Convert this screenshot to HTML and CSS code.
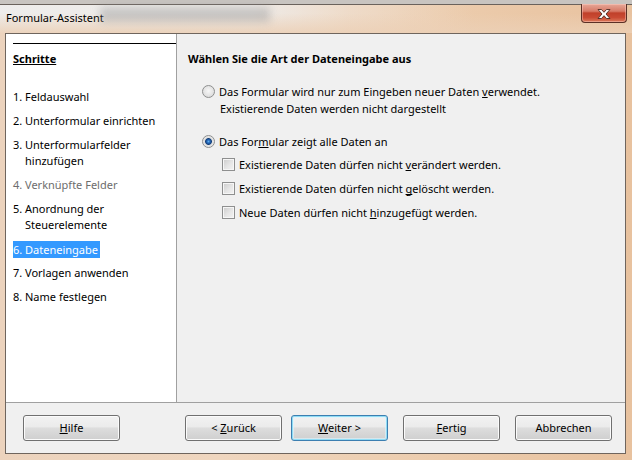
FILE: index.html
```html
<!DOCTYPE html>
<html lang="de">
<head>
<meta charset="utf-8">
<title>Formular-Assistent</title>
<link rel="stylesheet" href="styles.css">
</head>
<body>
<div class="frame">
  <div class="glass"></div>
  <div class="titlebar">
    <span class="title">Formular-Assistent</span>
  </div>
  <div class="close">
    <svg width="14" height="12" viewBox="0 0 14 12">
      <path d="M1 1.5 L4.5 1.5 L7 4.3 L9.5 1.5 L13 1.5 L9 6 L13 10.5 L9.5 10.5 L7 7.7 L4.5 10.5 L1 10.5 L5 6 Z" fill="#fff" stroke="#4d2a22" stroke-width="0.9" stroke-linejoin="round"/>
    </svg>
  </div>
  <div class="client">
    <div class="main">
      <div class="steps">
        <div class="steps-line"></div>
        <div class="steps-head">Schritte</div>
        <ol class="step-list">
          <li class="step"><span class="num">1.</span><span class="txt">Feldauswahl</span></li>
          <li class="step"><span class="num">2.</span><span class="txt">Unterformular einrichten</span></li>
          <li class="step"><span class="num">3.</span><span class="txt">Unterformularfelder hinzufügen</span></li>
          <li class="step disabled"><span class="num">4.</span><span class="txt">Verknüpfte Felder</span></li>
          <li class="step"><span class="num">5.</span><span class="txt">Anordnung der Steuerelemente</span></li>
          <li class="step"><span class="hl"><span class="num">6.</span><span class="txt">Dateneingabe</span></span></li>
          <li class="step"><span class="num">7.</span><span class="txt">Vorlagen anwenden</span></li>
          <li class="step"><span class="num">8.</span><span class="txt">Name festlegen</span></li>
        </ol>
      </div>
      <div class="content">
        <h1 class="heading">Wählen Sie die Art der Dateneingabe aus</h1>
        <div class="opt radio-opt first">
          <span class="radio"></span>
          <span class="label">Das Formular wird nur zum Eingeben neuer Daten <u>v</u>erwendet.<br><span class="l2">Existierende Daten werden nicht dargestellt</span></span>
        </div>
        <div class="opt radio-opt second">
          <span class="radio checked"></span>
          <span class="label">Das For<u>m</u>ular zeigt alle Daten an</span>
        </div>
        <div class="opt check-opt">
          <span class="check"></span>
          <span class="label">Existierende Daten dürfen nicht <u>v</u>erändert werden.</span>
        </div>
        <div class="opt check-opt">
          <span class="check"></span>
          <span class="label">Existierende Daten dürfen nicht <u>g</u>elöscht werden.</span>
        </div>
        <div class="opt check-opt">
          <span class="check"></span>
          <span class="label">Neue Daten dürfen nicht <u>h</u>inzugefügt werden.</span>
        </div>
      </div>
    </div>
    <div class="footer">
      <div class="btn"><span><u>H</u>ilfe</span></div>
      <div class="btn back"><span>&lt; <u>Z</u>urück</span></div>
      <div class="btn next focus"><span><u>W</u>eiter &gt;</span></div>
      <div class="btn finish"><span><u>F</u>ertig</span></div>
      <div class="btn cancel"><span>Abbrechen</span></div>
    </div>
  </div>
</div>
</body>
</html>
```

FILE: styles.css
```css
* { box-sizing: border-box; }

html, body {
  margin: 0;
  padding: 0;
}

body {
  width: 632px;
  height: 460px;
  overflow: hidden;
  font-family: "Noto Sans", "Open Sans", sans-serif;
  font-size: 11px;
  color: #000;
}

u {
  text-decoration-skip-ink: none;
}

.frame {
  position: relative;
  width: 632px;
  height: 460px;
  background: linear-gradient(90deg, #ecd3bd 0%, #efd6bf 35%, #ecccad 70%, #e8c29f 100%);
}

.glass {
  position: absolute;
  left: 100px;
  top: 7px;
  width: 170px;
  height: 15px;
  background: rgba(150, 150, 150, 0.45);
  filter: blur(4px);
}

.titlebar {
  height: 33px;
  display: flex;
  align-items: center;
  padding: 3px 0 0 6px;
  background:
    linear-gradient(to bottom, #c8c4c0 0, #c8c4c0 4px, #6a625c 4px, #6a625c 5px, rgba(0,0,0,0) 5px),
    linear-gradient(to bottom, rgba(236,208,182,0) 40%, rgba(236,208,182,0.85) 100%),
    linear-gradient(90deg, rgba(238,238,238,0.95) 0, rgba(238,238,238,0.85) 40%, rgba(240,236,232,0.4) 55%, rgba(240,230,220,0) 75%);
}

.title {
  line-height: 16px;
  white-space: nowrap;
}

.close {
  position: absolute;
  top: 4px;
  right: 5px;
  width: 46px;
  height: 19px;
  border: 1px solid #5a3026;
  border-top: none;
  border-radius: 0 0 4px 4px;
  background: linear-gradient(to bottom, #e6a898 0, #d77966 40%, #c0402a 50%, #c94a33 75%, #dc7b5c 100%);
  box-shadow: inset 0 0 0 1px rgba(255, 210, 200, 0.45);
  display: flex;
  align-items: center;
  justify-content: center;
  padding-top: 1px;
}

.close svg { display: block; }

.client {
  margin-left: 5px;
  width: 621px;
  height: 421px;
  border: 1px solid #6f655d;
  background: #f0f0f0;
  display: flex;
  flex-direction: column;
}

.main {
  display: flex;
  height: 368px;
  flex: none;
}

.steps {
  width: 171px;
  flex: none;
  background: #fff;
  border-right: 1px solid #a0a0a0;
}

.steps-line {
  margin: 9px 0 0 7px;
  height: 1px;
  background: #000;
}

.steps-head {
  margin-top: 7px;
  padding-left: 7px;
  line-height: 16px;
  font-weight: bold;
  text-decoration: underline;
  text-decoration-skip-ink: none;
}

.step-list {
  list-style: none;
  margin: 22px 0 0;
  padding: 0 0 0 7px;
}

.step {
  display: flex;
  line-height: 16px;
  margin-bottom: 8px;
}

.step .num {
  flex: none;
  width: 12px;
}

.step.disabled { color: #6d6d6d; }

.hl {
  display: flex;
  background: #3399ff;
  color: #fff;
  padding-right: 2px;
  line-height: 17px;
  margin-bottom: -1px;
}

.content {
  flex: 1;
  padding: 17px 11px 0;
}

.heading {
  margin: 0;
  font-size: 11px;
  font-weight: bold;
  line-height: 16px;
}

.opt {
  display: flex;
  align-items: flex-start;
  line-height: 17px;
}

.opt .label { white-space: nowrap; }

.radio-opt { margin-left: 14px; }
.radio-opt.first { margin-top: 16px; }
.radio-opt.second { margin-top: 16px; }

.check-opt { margin-left: 34px; margin-top: 7px; }
.radio-opt.second + .check-opt { margin-top: 6px; }

.radio {
  flex: none;
  width: 13px;
  height: 13px;
  margin: 2px 4px 0 0;
  border-radius: 50%;
  border: 1px solid #8e8f8f;
  background: radial-gradient(circle at 50% 45%, #f7f7f7 0, #e4e4e4 55%, #d2d2d2 100%);
}

.radio.checked {
  background: radial-gradient(circle at 50% 50%, #5fb0ee 0, #2466b8 1.6px, #15407a 3px, #e0e0e0 3.8px, #f2f2f2 100%);
}

.l2 { padding-left: 1px; }

.check {
  flex: none;
  width: 13px;
  height: 13px;
  margin: 2px 4px 0 0;
  border: 1px solid #8e8f8f;
  background: linear-gradient(135deg, #cbcbcb 0, #e6e6e6 55%, #f3f3f3 100%);
  box-shadow: inset 0 0 0 1px #f6f6f6;
}

.footer {
  flex: 1;
  border-top: 1px solid #a0a0a0;
  display: flex;
  align-items: flex-start;
  padding: 12px 13px 0 17px;
}

.btn {
  width: 97px;
  height: 26px;
  flex: none;
  display: flex;
  align-items: center;
  justify-content: center;
  border: 1px solid #707070;
  border-radius: 3px;
  background: linear-gradient(to bottom, #f2f2f2 0, #ebebeb 45%, #dddddd 50%, #cfcfcf 100%);
  box-shadow: inset 0 0 0 1px #fbfbfb;
  line-height: 16px;
  white-space: nowrap;
}

.btn.back { margin-left: 65px; }
.btn.next { margin-left: 9px; }
.btn.finish { margin-left: 15px; }
.btn.cancel { margin-left: 15px; }

.btn.focus {
  border-color: #3c7fb1;
  box-shadow: inset 0 0 0 1px #8fdcf5, inset 0 0 0 2px rgba(220, 245, 255, 0.6);
}
```
